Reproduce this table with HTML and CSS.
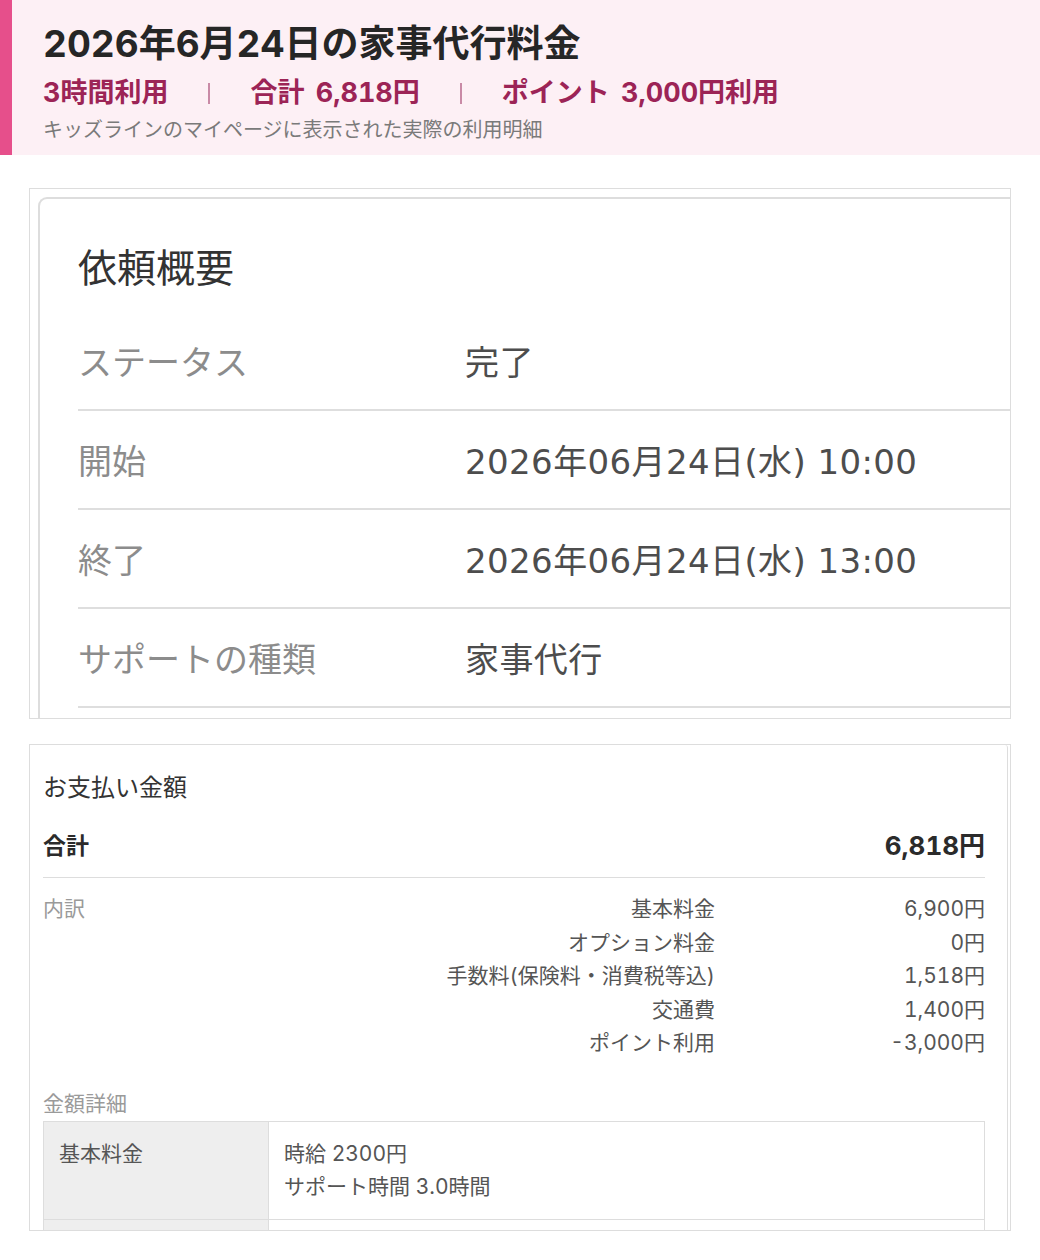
FILE: index.html
```html
<!DOCTYPE html>
<html lang="ja">
<head>
<meta charset="utf-8">
<title>2026年6月24日の家事代行料金</title>
<link rel="stylesheet" href="styles.css">
</head>
<body>
<header class="hero">
  <h1 class="hero-title">2026年6月24日の家事代行料金</h1>
  <div class="hero-stats">
    <span class="stat">3時間利用</span>
    <span class="sep"></span>
    <span class="stat">合計 6,818円</span>
    <span class="sep"></span>
    <span class="stat">ポイント 3,000円利用</span>
  </div>
  <p class="hero-note">キッズラインのマイページに表示された実際の利用明細</p>
</header>

<main class="main">
  <section class="shot shot-summary">
    <div class="summary">
      <h2 class="summary-title">依頼概要</h2>
      <div class="summary-row"><span class="summary-label">ステータス</span><span class="summary-value">完了</span></div>
      <div class="summary-row"><span class="summary-label">開始</span><span class="summary-value">2026年06月24日(水) 10:00</span></div>
      <div class="summary-row"><span class="summary-label">終了</span><span class="summary-value">2026年06月24日(水) 13:00</span></div>
      <div class="summary-row"><span class="summary-label">サポートの種類</span><span class="summary-value">家事代行</span></div>
      <div class="summary-row"><span class="summary-label">&nbsp;</span><span class="summary-value">&nbsp;</span></div>
    </div>
  </section>

  <section class="shot shot-pay">
    <div class="pay">
      <h2 class="pay-title">お支払い金額</h2>
      <div class="pay-total">
        <span>合計</span>
        <span class="pay-total-value">6,818円</span>
      </div>
      <div class="breakdown">
        <span class="breakdown-head">内訳</span>
        <span class="bd-label">基本料金</span><span class="bd-value">6,900円</span>
        <span class="bd-label">オプション料金</span><span class="bd-value">0円</span>
        <span class="bd-label">手数料(保険料・消費税等込)</span><span class="bd-value">1,518円</span>
        <span class="bd-label">交通費</span><span class="bd-value">1,400円</span>
        <span class="bd-label">ポイント利用</span><span class="bd-value">-3,000円</span>
      </div>
      <p class="detail-head">金額詳細</p>
      <table class="detail">
        <tr>
          <th>基本料金</th>
          <td>時給 2300円<br>サポート時間 3.0時間</td>
        </tr>
        <tr>
          <th>&nbsp;</th>
          <td>&nbsp;</td>
        </tr>
      </table>
    </div>
  </section>
</main>
</body>
</html>
```

FILE: styles.css
```css
* { box-sizing: border-box; }

html, body {
  margin: 0;
  padding: 0;
  background: #ffffff;
}

body {
  font-family: Inter, "Noto Sans CJK JP", "Noto Sans", sans-serif;
  font-variant-numeric: tabular-nums;
  color: #333333;
}

/* ---------- header ---------- */
.hero {
  background: #fdf0f5;
  border-left: 12px solid #e64f8b;
  padding: 22px 0 11px 31px;
}

.hero-title {
  margin: 0;
  font-size: 37px;
  line-height: 44px;
  font-weight: 700;
  color: #262626;
}

.hero-stats {
  margin-top: 9px;
  display: flex;
  align-items: center;
  gap: 40px;
  font-size: 27px;
  line-height: 36px;
  font-weight: 700;
  word-spacing: 4px;
  color: #9c2456;
}

.sep {
  width: 2px;
  height: 21px;
  background: #c98aa6;
}

.hero-note {
  margin: 5px 0 0;
  font-size: 20px;
  line-height: 28px;
  color: #7a7a7a;
}

/* ---------- main ---------- */
.main {
  padding: 33px 29px 0;
  display: flex;
  flex-direction: column;
  gap: 25px;
}

.shot {
  border: 1px solid #dddddd;
  overflow: hidden;
}

/* ---------- summary (依頼概要) ---------- */
.shot-summary {
  height: 531px;
  padding: 8px 0 0 8px;
}

.summary {
  width: calc(100% + 60px);
  border-top: 2px solid #dddddd;
  border-left: 2px solid #dddddd;
  border-top-left-radius: 9px;
  padding-left: 38px;
}

.summary-title {
  margin: 0;
  padding: 49px 0 24px;
  font-size: 39px;
  line-height: 40px;
  font-weight: 400;
  color: #333333;
}

.summary-row {
  display: flex;
  align-items: center;
  height: 99px;
  border-bottom: 2px solid #dedede;
  font-size: 34px;
}

.summary-label {
  width: 387px;
  flex: none;
  color: #8c8c8c;
}

.summary-value {
  font-family: "DejaVu Sans", "Noto Sans CJK JP", sans-serif;
  letter-spacing: 0.4px;
  color: #4d4d4d;
}

/* ---------- payment (お支払い金額) ---------- */
.shot-pay {
  height: 487px;
}

.pay {
  height: 100%;
  margin-right: 2px;
  border-right: 1px solid #dddddd;
  border-top-right-radius: 3px;
  padding: 26px 22px 0 13px;
}

.pay-title {
  margin: 0;
  font-size: 24px;
  line-height: 34px;
  font-weight: 400;
  color: #333333;
}

.pay-total {
  margin-top: 22px;
  display: flex;
  justify-content: space-between;
  align-items: center;
  height: 51px;
  padding-bottom: 13px;
  border-bottom: 1px solid #dddddd;
  font-weight: 700;
  color: #2b2b2b;
  font-size: 23px;
  line-height: 36px;
}

.pay-total-value {
  font-size: 26px;
}

.breakdown {
  margin-top: 14px;
  display: grid;
  grid-template-columns: 1fr auto 270px;
  font-size: 21px;
  line-height: 33.5px;
  color: #555555;
}

.breakdown-head {
  grid-column: 1;
  grid-row: 1;
  color: #9a9a9a;
}

.bd-label {
  grid-column: 2;
  text-align: right;
}

.bd-value {
  grid-column: 3;
  text-align: right;
}

.detail-head {
  margin: 29px 0 0;
  font-size: 21px;
  line-height: 30px;
  color: #9a9a9a;
}

.detail {
  margin-top: 2px;
  width: 100%;
  border-collapse: collapse;
  font-size: 21px;
  line-height: 33px;
  color: #555555;
}

.detail th,
.detail td {
  border: 1px solid #dddddd;
  text-align: left;
  vertical-align: top;
  font-weight: 400;
  padding: 15px 15px 16px;
}

.detail th {
  width: 225px;
  background: #eeeeee;
}
```
